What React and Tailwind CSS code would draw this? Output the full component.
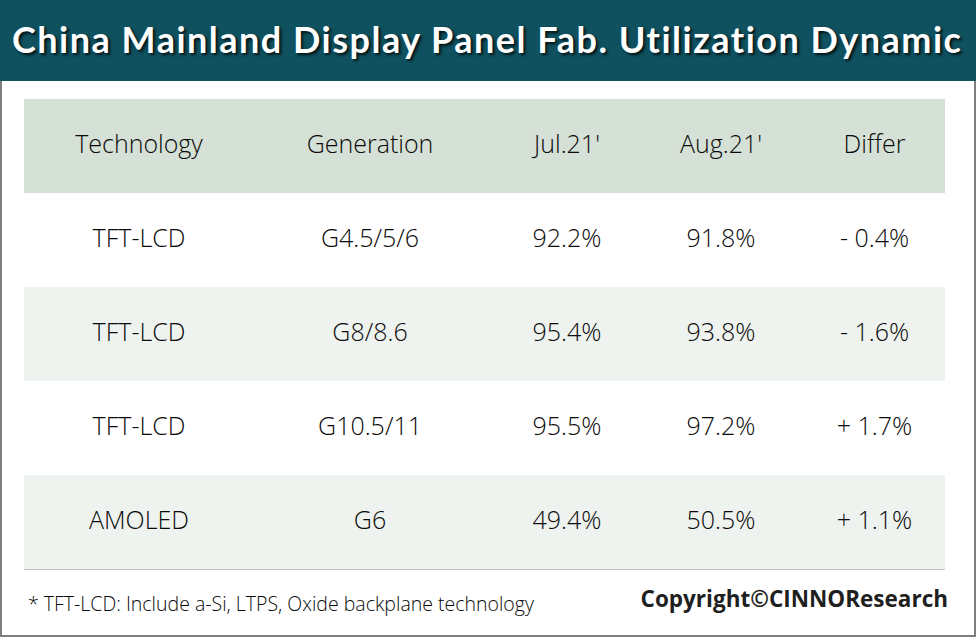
import React from "react";

const rows = [
  { tech: "TFT-LCD", gen: "G4.5/5/6", jul: "92.2%", aug: "91.8%", diff: "- 0.4%", alt: false },
  { tech: "TFT-LCD", gen: "G8/8.6", jul: "95.4%", aug: "93.8%", diff: "- 1.6%", alt: true },
  { tech: "TFT-LCD", gen: "G10.5/11", jul: "95.5%", aug: "97.2%", diff: "+ 1.7%", alt: false },
  { tech: "AMOLED", gen: "G6", jul: "49.4%", aug: "50.5%", diff: "+ 1.1%", alt: true },
];

const cols = "grid grid-cols-[230px_232px_162px_146px_151px] items-center";

function Row({ cells, className }) {
  return (
    <div className={`${cols} h-[94px] pb-[4px] text-[25px] text-[#0a0a0a] ${className}`}>
      <div className="text-center">{cells[0]}</div>
      <div className="text-center">{cells[1]}</div>
      <div className="text-center">{cells[2]}</div>
      <div className="text-center">{cells[3]}</div>
      <div className="text-center pl-[10px]">{cells[4]}</div>
    </div>
  );
}

export default function App() {
  return (
    <div className="w-[976px] h-[637px] bg-white font-['Open_Sans',sans-serif] font-light">
      <header className="h-[81px] bg-[#0f515f] flex items-center pl-[12px] pb-[4px]">
        <h1 className="font-['Lato',sans-serif] font-bold text-white text-[36px] tracking-[1.5px] leading-none whitespace-nowrap [text-shadow:2px_2px_3px_rgba(0,0,0,0.8)]">
          China Mainland Display Panel Fab. Utilization Dynamic
        </h1>
      </header>

      <div className="h-[556px] border-x-2 border-b-2 border-[#7f7f7f] pl-[22px] pr-[29px] pt-[18px]">
        <Row
          cells={["Technology", "Generation", "Jul.21'", "Aug.21'", "Differ"]}
          className="bg-[#d5e0d6] h-[93px]"
        />
        {rows.map((r, i) => (
          <Row
            key={i}
            cells={[r.tech, r.gen, r.jul, r.aug, r.diff]}
            className={r.alt ? "bg-[#eef3ef]" : "bg-white"}
          />
        ))}
        <div className="border-t border-[#bfbfbf]" />

        <div className="flex items-start justify-between pt-[12px]">
          <p className="pl-[4px] pt-[7px] text-[19.5px] text-[#0a0a0a]">
            * TFT-LCD: Include a-Si, LTPS, Oxide backplane technology
          </p>
          <p className="font-['Open_Sans',sans-serif] font-bold text-[22.5px] text-[#1f1f1f] -mr-[3px]">
            Copyright©CINNOResearch
          </p>
        </div>
      </div>
    </div>
  );
}
